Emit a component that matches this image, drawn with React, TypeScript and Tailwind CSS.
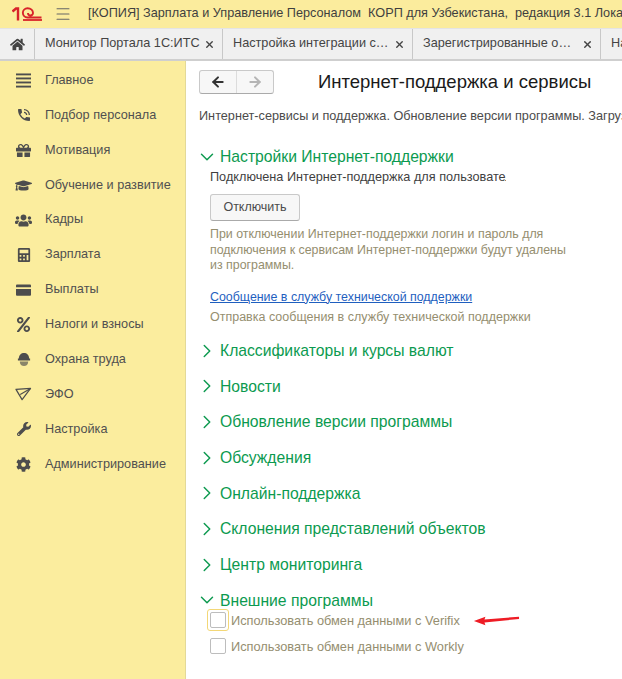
import React from 'react';
import { FaHome, FaGift, FaGraduationCap, FaUsers, FaCalculator, FaWrench, FaCog, FaPercent } from 'react-icons/fa';
import { MdPhoneInTalk } from 'react-icons/md';
import { ChevronDown, ChevronRight, ArrowLeft, ArrowRight, X, Menu } from 'lucide-react';

const PlaneIcon = ({ className }: { className?: string }) => (
  <svg viewBox="0 0 18 16" className={className} fill="none" stroke="currentColor" strokeWidth="1.3" strokeLinejoin="round">
    <path d="M1 2.5 L16.5 1.5 L7.5 13.5 Z" />
    <path d="M16.5 1.5 L5.5 8" />
  </svg>
);

const ListIcon = ({ className }: { className?: string }) => (
  <svg viewBox="0 0 16 15" className={className} fill="currentColor">
    <rect x="0" y="0" width="16" height="2" />
    <rect x="0" y="4.3" width="16" height="2" />
    <rect x="0" y="8.6" width="16" height="2" />
    <rect x="0" y="13" width="16" height="2" />
  </svg>
);

const CardIcon = ({ className }: { className?: string }) => (
  <svg viewBox="0 0 16 12" className={className} fill="currentColor">
    <path d="M1 0 H15 A1 1 0 0 1 16 1 V3 H0 V1 A1 1 0 0 1 1 0 Z" />
    <path d="M0 5 H16 V11 A1 1 0 0 1 15 12 H1 A1 1 0 0 1 0 11 Z" />
  </svg>
);

const HelmetIcon = ({ className }: { className?: string }) => (
  <svg viewBox="0 0 14 16" className={className} fill="currentColor">
    <path d="M1.5 7 C1.5 3 4 1 7 1 C10 1 12.5 3 12.5 7 H13.5 V9 H0.5 V7 Z" />
    <path d="M2.5 10 H11.5 C11.5 13 9.5 15 7 15 C4.5 15 2.5 13 2.5 10 Z" opacity="0.65" />
  </svg>
);

const menu: { label: string; icon: React.ReactNode }[] = [
  { label: 'Главное', icon: <ListIcon className="h-[15px] w-[15px]" /> },
  { label: 'Подбор персонала', icon: <MdPhoneInTalk className="h-4 w-4" /> },
  { label: 'Мотивация', icon: <FaGift className="h-[15px] w-[15px]" /> },
  { label: 'Обучение и развитие', icon: <FaGraduationCap className="h-[17px] w-[17px]" /> },
  { label: 'Кадры', icon: <FaUsers className="h-[17px] w-[17px]" /> },
  { label: 'Зарплата', icon: <FaCalculator className="h-[14px] w-[14px]" /> },
  { label: 'Выплаты', icon: <CardIcon className="h-[12px] w-[15px]" /> },
  { label: 'Налоги и взносы', icon: <FaPercent className="h-[15px] w-[15px]" /> },
  { label: 'Охрана труда', icon: <HelmetIcon className="h-[15px] w-[14px]" /> },
  { label: 'ЭФО', icon: <PlaneIcon className="h-[15px] w-[17px]" /> },
  { label: 'Настройка', icon: <FaWrench className="h-[14px] w-[14px]" /> },
  { label: 'Администрирование', icon: <FaCog className="h-[15px] w-[15px]" /> },
];

const tabs = [
  { label: 'Монитор Портала 1С:ИТС', width: 'w-[188px]' },
  { label: 'Настройка интеграции с…', width: 'w-[190px]' },
  { label: 'Зарегистрированные о…', width: 'w-[188px]' },
];

const sections = [
  'Классификаторы и курсы валют',
  'Новости',
  'Обновление версии программы',
  'Обсуждения',
  'Онлайн-поддержка',
  'Склонения представлений объектов',
  'Центр мониторинга',
];

export default function App() {
  return (
    <div className="flex h-[679px] w-[622px] flex-col overflow-hidden bg-white font-['Liberation_Sans',Arial,sans-serif] text-[12.7px] text-[#4b4b4b]">
      <div className="flex h-[28px] shrink-0 items-center overflow-hidden whitespace-nowrap bg-[#fbec9d]">
        <svg viewBox="0 0 30 14" className="ml-[12px] h-[14px] w-[30px] shrink-0">
          <path d="M0.5 4.5 L4 1.5 H6 V13.5" fill="none" stroke="#d8232a" strokeWidth="2.4" />
          <path d="M29.5 10.5 H15.5 A4.6 4.6 0 1 1 15.5 1.2 C19 1.2 21 3.4 21 6 A2.4 2.4 0 0 1 16 6" fill="none" stroke="#d8232a" strokeWidth="1.9" />
          <path d="M11 13 H30" stroke="#d8232a" strokeWidth="1.8" />
        </svg>
        <Menu className="ml-[12px] h-[18px] w-[18px] shrink-0 text-[#666]" strokeWidth={1.4} />
        <span className="ml-[16px] text-[#3f3f3f]">[КОПИЯ] Зарплата и Управление Персоналом&nbsp; КОРП для Узбекистана,&nbsp; редакция 3.1 Локальная</span>
      </div>

      <div className="flex h-[33px] shrink-0 items-stretch overflow-hidden border-b-2 border-t border-b-[#cfcfcf] border-t-[#e4e4e4] bg-[#f0f0f0]">
        <div className="flex w-[35px] shrink-0 items-center justify-center border-r border-[#c8c8c8]">
          <FaHome className="h-[15px] w-[15px] text-[#444]" />
        </div>
        {tabs.map((tab) => (
          <div key={tab.label} className={`flex shrink-0 items-center justify-between border-r border-[#c8c8c8] pl-[10px] pr-[7px] ${tab.width}`}>
            <span className="whitespace-nowrap text-[#444]">{tab.label}</span>
            <X className="h-[11px] w-[11px] text-[#444]" strokeWidth={3} />
          </div>
        ))}
        <div className="flex items-center pl-[10px] text-[#444]">На</div>
      </div>

      <div className="flex min-h-0 flex-1">
        <div className="w-[186px] shrink-0 border-r border-[#e3d998] bg-[#fbed9e] pt-[2px]">
          {menu.map((item) => (
            <div key={item.label} className="flex h-[34.9px] items-center">
              <div className="flex w-[45px] shrink-0 items-center justify-center pl-[2px] text-[#4d4d4d]">{item.icon}</div>
              <span className="text-[#505050]">{item.label}</span>
            </div>
          ))}
        </div>

        <div className="min-w-0 flex-1 overflow-hidden pl-[13px]">
          <div className="mt-[9px] flex h-[24px] items-center">
            <div className="flex h-[24px] w-[75px] shrink-0 rounded-[3px] border border-[#c9c9c9] border-b-[#aaa] bg-[#f7f7f7]">
              <div className="flex w-[37px] items-center justify-center border-r border-[#dcdcdc]">
                <ArrowLeft className="h-[16px] w-[16px] text-[#333]" strokeWidth={3} />
              </div>
              <div className="flex flex-1 items-center justify-center">
                <ArrowRight className="h-[16px] w-[16px] text-[#b5b5b5]" strokeWidth={3} />
              </div>
            </div>
            <h1 className="ml-[44px] whitespace-nowrap text-[18.5px] text-[#1a1a1a]">Интернет-поддержка и сервисы</h1>
          </div>

          <p className="mt-[13px] overflow-hidden whitespace-nowrap text-[#4b4b4b]">Интернет-сервисы и поддержка. Обновление версии программы. Загрузка классификаторов</p>

          <div className="mt-[21px] flex h-[20px] items-center">
            <ChevronDown className="-ml-[3px] h-[22px] w-[22px] shrink-0 text-[#0e9a50]" strokeWidth={1.6} />
            <span className="ml-[2px] text-[15.7px] text-[#0b9a4f]">Настройки Интернет-поддержки</span>
          </div>
          <div className="pl-[11px]">
            <div className="mt-[1px] w-[296px] overflow-hidden whitespace-nowrap text-[#3f3f3f]">Подключена Интернет-поддержка для пользователя</div>
            <button className="mt-[7px] h-[27px] w-[90px] rounded-[3px] border border-[#c9c9c9] border-b-[#aaa] bg-[#f7f7f7] text-[12.5px] text-[#4b4b4b]">Отключить</button>
            <p className="mt-[6px] w-[362px] text-[12.4px] leading-[15.5px] text-[#958e6f]">При отключении Интернет-поддержки логин и пароль для подключения к сервисам Интернет-поддержки будут удалены из программы.</p>
            <a className="mt-[14px] block text-[12.4px] text-[#1f5fbf] underline">Сообщение в службу технической поддержки</a>
            <p className="mt-[2px] text-[12.5px] text-[#958e6f]">Отправка сообщения в службу технической поддержки</p>
          </div>

          <div className="mt-[6px]">
            {sections.map((title) => (
              <div key={title} className="flex h-[35.65px] items-center">
                <ChevronRight className="-ml-[3px] h-[22px] w-[22px] shrink-0 text-[#0e9a50]" strokeWidth={1.6} />
                <span className="ml-[2px] text-[15.7px] text-[#0b9a4f]">{title}</span>
              </div>
            ))}
          </div>

          <div className="mt-[8px] flex h-[20px] items-center">
            <ChevronDown className="-ml-[3px] h-[22px] w-[22px] shrink-0 text-[#0e9a50]" strokeWidth={1.6} />
            <span className="ml-[2px] text-[15.7px] text-[#0b9a4f]">Внешние программы</span>
          </div>
          <div className="-mt-[1px] flex h-[22px] items-center pl-[8px]">
            <span className="flex h-[22px] w-[22px] items-center justify-center rounded-[3px] border border-[#f3d777]">
              <span className="h-[16px] w-[16px] rounded-[2px] border border-[#bdbdbd] bg-white" />
            </span>
            <span className="ml-[2px] text-[12.8px] text-[#958e6f]">Использовать обмен данными с Verifix</span>
            <svg viewBox="0 0 50 12" className="ml-[12px] h-[12px] w-[48px]">
              <path d="M2 7 L14 2.5 L13 5.5 L49 2.5 L49 5 L13 8.5 L14 11.5 Z" fill="#ee1c25" />
            </svg>
          </div>
          <div className="mt-[4px] flex h-[22px] items-center pl-[11px]">
            <span className="h-[16px] w-[16px] rounded-[2px] border border-[#bdbdbd] bg-white" />
            <span className="ml-[5px] text-[12.8px] text-[#958e6f]">Использовать обмен данными с Workly</span>
          </div>
        </div>
      </div>
    </div>
  );
}
